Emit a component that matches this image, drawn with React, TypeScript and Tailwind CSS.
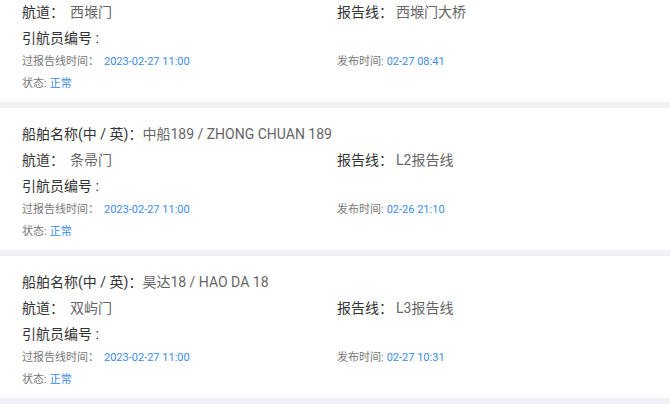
type Ship = {
  name: string
  channel: string
  line: string
  passTime: string
  publishTime: string
  status: string
}

const ships: Ship[] = [
  {
    name: '浙海158 / ZHE HAI 158',
    channel: '西堠门',
    line: '西堠门大桥',
    passTime: '2023-02-27 11:00',
    publishTime: '02-27 08:41',
    status: '正常',
  },
  {
    name: '中船189 / ZHONG CHUAN 189',
    channel: '条帚门',
    line: 'L2报告线',
    passTime: '2023-02-27 11:00',
    publishTime: '02-26 21:10',
    status: '正常',
  },
  {
    name: '昊达18 / HAO DA 18',
    channel: '双屿门',
    line: 'L3报告线',
    passTime: '2023-02-27 11:00',
    publishTime: '02-27 10:31',
    status: '正常',
  },
  {
    name: '舟港拖12 / ZHOU GANG TUO 12',
    channel: '虾峙门',
    line: 'L1报告线',
    passTime: '2023-02-27 12:00',
    publishTime: '02-27 09:15',
    status: '正常',
  },
]

function ShipCard({ ship }: { ship: Ship }) {
  return (
    <div className="bg-white pt-[13px] pb-[7px] px-[22px]">
      <div className="grid grid-cols-[315px_1fr]">
        <div className="col-span-2 h-[26px] flex items-center text-[14px]">
          <span className="text-[#333]">船舶名称(中 / 英)：</span>
          <span className="text-[#666]">{ship.name}</span>
        </div>

        <div className="h-[26px] flex items-center text-[14px]">
          <span className="text-[#333]">航道：</span>
          <span className="ml-[6px] text-[#666]">{ship.channel}</span>
        </div>
        <div className="h-[26px] flex items-center text-[14px]">
          <span className="text-[#333]">报告线：</span>
          <span className="ml-[3px] text-[#666]">{ship.line}</span>
        </div>

        <div className="col-span-2 h-[26px] flex items-center text-[14px] text-[#333]">
          引航员编号 :
        </div>

        <div className="h-[22px] flex items-center text-[11px]">
          <span className="text-[#777]">过报告线时间：</span>
          <span className="ml-[5px] text-[#3c8ce7]">{ship.passTime}</span>
        </div>
        <div className="h-[22px] flex items-center text-[11px]">
          <span className="text-[#777]">发布时间:</span>
          <span className="ml-[3px] text-[#3c8ce7]">{ship.publishTime}</span>
        </div>

        <div className="col-span-2 h-[22px] flex items-center text-[11px]">
          <span className="text-[#777]">状态:</span>
          <span className="ml-[3px] text-[#3c8ce7]">{ship.status}</span>
        </div>
      </div>
    </div>
  )
}

export default function App() {
  return (
    <div
      className="w-[670px] h-[415px] overflow-hidden bg-white"
      style={{ fontFamily: "Roboto, 'Noto Sans CJK SC', sans-serif" }}
    >
      <div className="-mt-[40px] flex flex-col gap-[6px] bg-[#f1f1f6]">
        {ships.map(ship => (
          <ShipCard key={ship.name} ship={ship} />
        ))}
      </div>
    </div>
  )
}
